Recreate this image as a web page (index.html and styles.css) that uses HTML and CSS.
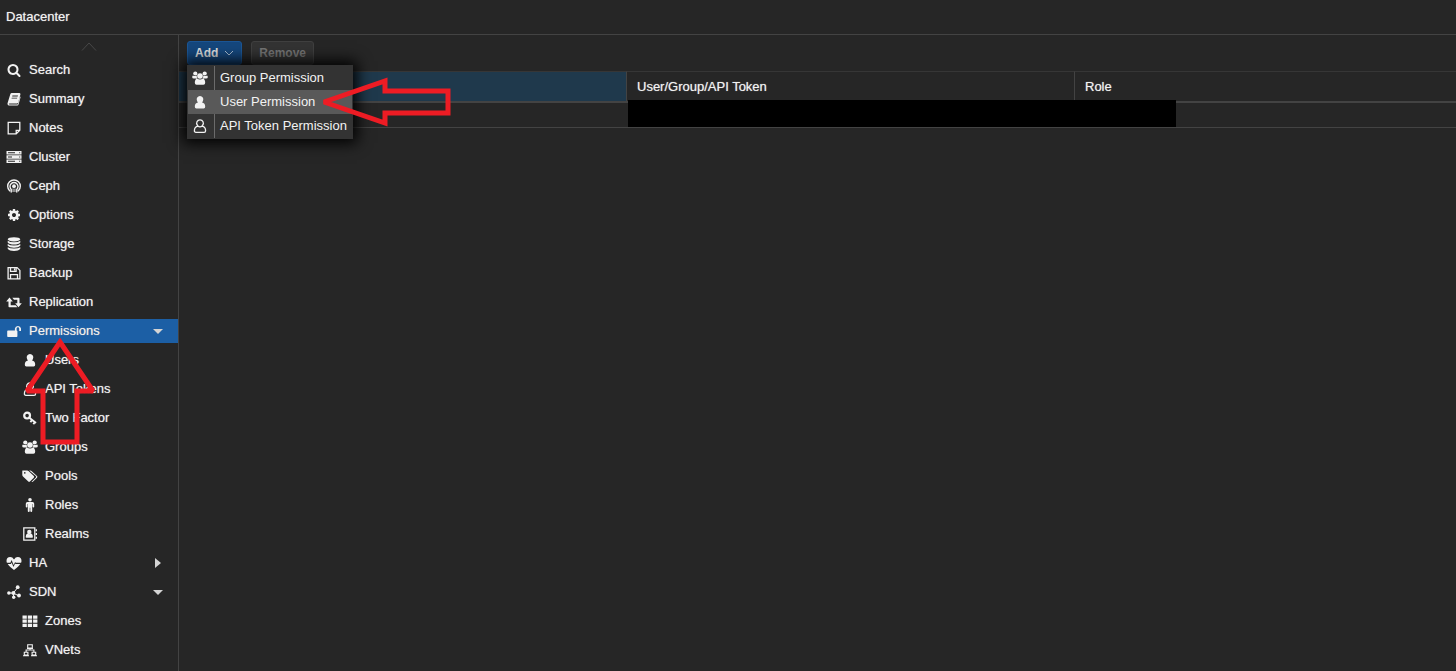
FILE: index.html
```html
<!DOCTYPE html>
<html lang="en">
<head>
<meta charset="utf-8">
<title>Datacenter</title>
<link rel="stylesheet" href="styles.css">
</head>
<body>
<svg class="defs" aria-hidden="true">
  <symbol id="search" viewBox="0 0 1792 1792"><path d="M1216 832q0-185-131.500-316.500t-316.500-131.500-316.500 131.500-131.500 316.500 131.500 316.500 316.500 131.500 316.500-131.500 131.500-316.500zm512 832q0 52-38 90t-90 38q-54 0-90-38l-343-342q-179 124-399 124-143 0-273.500-55.500t-225-150-150-225-55.500-273.500 55.500-273.500 150-225 225-150 273.500-55.500 273.500 55.500 225 150 150 225 55.500 273.500q0 220-124 399l343 343q37 37 37 90z"/></symbol>
  <symbol id="book" viewBox="0 0 14 14"><path fill-rule="evenodd" d="M4.800 1h7.700q1.200.2.900 1.500l-2.200 8q-.3 1-1.400 1H2.500q-.9 0-.8.5.1.400.8.400h7.800q.5 0 .7-.6l2.100-7.300q.6.300.4 1.100l-2 7q-.3 1-1.300 1H2.200Q.7 13.500.5 12q-.1-.6.200-1.300L3.300 2.200Q3.700 1 4.800 1zM5.400 3.500l-.2.900h5.500l.3-.9zM4.800 5.700l-.3.900H10l.3-.9z"/></symbol>
  <symbol id="note" viewBox="0 0 14 14"><path fill="none" stroke="currentColor" stroke-width="1.300" d="M1.200 1.300h11.600v8l-3.600 3.600h-8zM9.200 12.500V9.300h3.300"/></symbol>
  <symbol id="server" viewBox="0 0 16 14"><path fill-rule="evenodd" d="M.5 1h15v3.500H.5zM.5 5.300h15v3.400H.5zM.5 9.500h15V13H.5zM2 2.300v.9h7v-.9zM2 6.500v.9h4v-.9zM2 10.800v.9h7v-.9zM13.200 2.300v.9h1v-.9zM13.200 6.500v.9h1v-.9zM13.200 10.800v.9h1v-.9z"/></symbol>
  <symbol id="ceph" viewBox="0 0 14 14"><g fill="none" stroke="currentColor" stroke-width="1.400" stroke-linecap="round"><path d="M2.600 11.800A6.300 6.300 0 1 1 11.400 11.800M4.200 13V10.400A4 4 0 1 1 9.800 10.400V13"/></g><circle cx="7" cy="7.200" r="1.900"/><path d="M5.600 9.500h.9v3.500h-.9zM7.500 9.500h.9v3.500h-.9z"/></symbol>
  <symbol id="cog" viewBox="0 0 1792 1792"><path d="M1152 896q0-106-75-181t-181-75-181 75-75 181 75 181 181 75 181-75 75-181zm512-109v222q0 12-8 23t-20 13l-185 28q-19 54-39 91 35 50 107 138 10 12 10 25t-9 23q-27 37-99 108t-94 71q-12 0-26-9l-138-108q-44 23-91 38-16 136-29 186-7 28-36 28h-222q-14 0-24.500-8.500t-11.500-21.500l-28-184q-49-16-90-37l-141 107q-10 9-25 9-14 0-25-11-126-114-165-168-7-10-7-23 0-12 8-23 15-21 51-66.500t54-70.500q-27-50-41-99l-183-27q-13-2-21-12.500t-8-23.500v-222q0-12 8-23t19-13l186-28q14-46 39-92-40-57-107-138-10-12-10-24 0-10 9-23 26-36 98.500-107.500t94.500-71.500q13 0 26 10l138 107q44-23 91-38 16-136 29-186 7-28 36-28h222q14 0 24.500 8.500t11.500 21.500l28 184q49 16 90 37l142-107q9-9 24-9 13 0 25 10 129 119 165 170 7 8 7 22 0 12-8 23-15 21-51 66.500t-54 70.500q26 50 41 98l183 28q13 2 21 12.500t8 23.500z"/></symbol>
  <symbol id="database" viewBox="0 0 14 14"><ellipse cx="7" cy="2.300" rx="6.300" ry="2.100"/><path d="M.7 3.800Q3 5.300 7 5.300t6.300-1.500v1.700Q11.500 7.600 7 7.600T.7 5.500zM.7 7Q3 8.500 7 8.500T13.300 7v1.700Q11.500 10.700 7 10.700T.7 8.700zM.7 10.200Q3 11.600 7 11.600t6.300-1.400v1.600Q11.500 14 7 14T.7 11.800z"/></symbol>
  <symbol id="save" viewBox="0 0 14 14"><g fill="none" stroke="currentColor" stroke-width="1.300"><path d="M1.100 1.600h9l2.800 2.800v8.500H1.100zM3.500 12.500V8.600h7v3.900M3.500 2v3.400h5.600V2"/></g><path d="M6.900 2.300h1.300v2.300H6.900z"/></symbol>
  <symbol id="retweet" viewBox="0 0 16 14"><path d="M3.500 2.500l3.300 4H4.700v3.700h5l1.700 2H3.200q-.7 0-.7-.7v-5H.2zM6.300 2.700h6.300q.9 0 .9.900v4.700h2.300l-3.300 4-3.300-4h2.100V4.700H8z"/></symbol>
  <symbol id="unlock" viewBox="0 0 14 14"><path d="M1 6.500h6.900V4.600a3.100 3.100 0 0 1 6.100 0v2q0 .5-.5.5h-.8q-.5 0-.5-.5v-2a1.300 1.300 0 0 0-2.600 0v1.900q.8 0 .8.800v4.900q0 .8-.8.800H1q-.8 0-.8-.8V7.300q0-.8.8-.8z"/></symbol>
  <symbol id="user" viewBox="0 0 14 14"><path d="M7 1a3.300 3.300 0 0 1 3 4.700Q9.400 7.200 9 7.500q3.200.5 3.200 4.300 0 1.700-1.500 1.700H3.300q-1.500 0-1.500-1.700Q1.800 8 5 7.500q-.4-.3-1-1.800A3.300 3.300 0 0 1 7 1z"/></symbol>
  <symbol id="user-o" viewBox="0 0 14 14"><path fill="none" stroke="currentColor" stroke-width="1.300" d="M7 .8a3.300 3.300 0 0 1 2.600 5.400L9 7.200q3.600.6 3.600 4.500 0 1.600-1.500 1.600H2.900q-1.500 0-1.500-1.600 0-3.900 3.600-4.500l-.6-1A3.300 3.300 0 0 1 7 .8zM4.700 7.100Q7 8.800 9.300 7.100"/></symbol>
  <symbol id="key" viewBox="0 0 14 14"><circle cx="4.100" cy="4.600" r="2.900" fill="none" stroke="currentColor" stroke-width="2.200"/><path fill="none" stroke="currentColor" stroke-width="1.900" d="M6 6.500l7 5.400M9.200 8.800l-1.800 2.300M12 11L10.300 13.200"/></symbol>
  <symbol id="users" viewBox="0 0 16 14"><circle cx="3.300" cy="2.500" r="2.100"/><circle cx="12.700" cy="2.500" r="2.100"/><circle cx="8" cy="5" r="2.800"/><path d="M1 4.500q2 1 4 0-.7 1.600.3 3H2Q.2 7.500.2 6.300.2 4.700 1 4.500zM15 4.500q-2 1-4 0 .7 1.600-.3 3H14q1.800 0 1.800-1.200 0-1.600-.8-1.800zM5 7.400q3 2 6 0 2.200.8 2.200 4.300 0 2-1.800 2H4.600q-1.800 0-1.800-2Q2.800 8.200 5 7.400z"/></symbol>
  <symbol id="tags" viewBox="0 0 16 14"><path fill-rule="evenodd" d="M.5 1.500h4.700q.7 0 1.300.6l5.300 5q.8.800 0 1.600l-3.900 3.900q-.8.800-1.600 0L1 7.400Q.3 6.800.3 6V1.700zM2.800 3.100a.8.800 0 1 0 0 1.600.8.800 0 0 0 0-1.600z"/><path d="M7.200 1.500h1q.7 0 1.300.6l5.500 5q.8.800 0 1.600l-3.900 3.900q-.7.700-1.500.2l4.300-4.300q.7-.7-.1-1.400z"/></symbol>
  <symbol id="male" viewBox="0 0 14 14"><circle cx="7" cy="1.800" r="1.800"/><path d="M4.500 4h5q1.700 0 1.700 1.700v3q0 .8-.8.800t-.8-.8V6h-.4v7q0 1-.9 1t-1-1V9.700h-.6V13q0 1-1 1t-.9-1V6h-.4v2.700q0 .8-.8.800t-.8-.8v-3Q2.800 4 4.500 4z"/></symbol>
  <symbol id="address" viewBox="0 0 14 14"><path fill="none" stroke="currentColor" stroke-width="1.300" d="M.8.8h11v12.400H.8z"/><circle cx="6.300" cy="5" r="2.200"/><path d="M4.400 6.500q1.900 1.300 3.800 0 1.700.5 1.700 3.500 0 .8-.8.800H3.500q-.8 0-.8-.8 0-3 1.700-3.500zM12.600 2.300H14v2h-1.400zM12.600 6H14v2h-1.400zM12.600 9.700H14v2h-1.400z"/></symbol>
  <symbol id="heartbeat" viewBox="0 0 16 14"><path d="M8 3.400Q6.500 1 4.200 1 .5 1 .5 5q0 .8.400 1.800h3.500L5.600 4l2 5 1.500-3 .6.800h5.400q.4-1 .4-1.800 0-4-3.700-4Q9.500 1 8 3.400zM1.700 7.900Q3.200 10.300 8 14q4.800-3.700 6.300-6.100H9.500l-.4-.5-1.600 3.500-1.900-4.500-.6 1.500z"/></symbol>
  <symbol id="nodes" viewBox="0 0 14 14"><path fill="none" stroke="currentColor" d="M2 8l4.300.1L10.600 2.600M6.300 8.100l5.200 2.600M6.300 8.100l.3 4"/><circle cx="1.900" cy="8" r="1.800"/><circle cx="6.400" cy="8" r="2"/><circle cx="10.700" cy="2.200" r="1.900"/><circle cx="12" cy="10.500" r="1.900"/><circle cx="6.700" cy="12.300" r="1.700"/></symbol>
  <symbol id="grid" viewBox="0 0 16 14"><path d="M.5 1.500h4.300v3.200H.5zM5.800 1.500h4.300v3.200H5.800zM11.100 1.500h4.300v3.200h-4.300zM.5 5.600h4.300v3.200H.5zM5.800 5.600h4.300v3.200H5.800zM11.100 5.600h4.300v3.200h-4.300zM.5 9.700h4.300v3.200H.5zM5.800 9.700h4.300v3.200H5.800zM11.100 9.700h4.300v3.200h-4.300z"/></symbol>
  <symbol id="network" viewBox="0 0 14 14"><path fill="none" stroke="currentColor" stroke-width="1.100" d="M4.700 1.700h4.600V5H4.700zM1.300 9.200h3.600v2.900H1.300zM9.100 9.200h3.600v2.900H9.100zM7 5v2M3.100 9V7h7.800v2M0 12.700h6M8 12.700h6M4 5.500h6"/></symbol>
</svg>

<header class="titlebar">Datacenter</header>
<div class="body">
  <nav class="sidebar">
    <button class="scroll-up" aria-label="Scroll up"><svg viewBox="0 0 16 9"><path d="M1 8.500L8 1l7 7.500"/></svg></button>
    <ul class="tree">
      <li><a href="#"><svg class="icon"><use href="#search"/></svg>Search</a></li>
      <li><a href="#"><svg class="icon"><use href="#book"/></svg>Summary</a></li>
      <li><a href="#"><svg class="icon"><use href="#note"/></svg>Notes</a></li>
      <li><a href="#"><svg class="icon"><use href="#server"/></svg>Cluster</a></li>
      <li><a href="#"><svg class="icon"><use href="#ceph"/></svg>Ceph</a></li>
      <li><a href="#"><svg class="icon"><use href="#cog"/></svg>Options</a></li>
      <li><a href="#"><svg class="icon"><use href="#database"/></svg>Storage</a></li>
      <li><a href="#"><svg class="icon"><use href="#save"/></svg>Backup</a></li>
      <li><a href="#"><svg class="icon"><use href="#retweet"/></svg>Replication</a></li>
      <li><a href="#" class="selected" aria-current="page"><svg class="icon"><use href="#unlock"/></svg>Permissions<span class="caret open"></span></a></li>
      <li><a href="#" class="child"><svg class="icon"><use href="#user"/></svg>Users</a></li>
      <li><a href="#" class="child"><svg class="icon"><use href="#user-o"/></svg>API Tokens</a></li>
      <li><a href="#" class="child"><svg class="icon"><use href="#key"/></svg>Two Factor</a></li>
      <li><a href="#" class="child"><svg class="icon"><use href="#users"/></svg>Groups</a></li>
      <li><a href="#" class="child"><svg class="icon"><use href="#tags"/></svg>Pools</a></li>
      <li><a href="#" class="child"><svg class="icon"><use href="#male"/></svg>Roles</a></li>
      <li><a href="#" class="child"><svg class="icon"><use href="#address"/></svg>Realms</a></li>
      <li><a href="#"><svg class="icon"><use href="#heartbeat"/></svg>HA<span class="caret closed"></span></a></li>
      <li><a href="#"><svg class="icon"><use href="#nodes"/></svg>SDN<span class="caret open"></span></a></li>
      <li><a href="#" class="child"><svg class="icon"><use href="#grid"/></svg>Zones</a></li>
      <li><a href="#" class="child"><svg class="icon"><use href="#network"/></svg>VNets</a></li>
    </ul>
  </nav>

  <main class="content">
    <div class="toolbar">
      <div class="dropdown">
        <button class="btn primary" aria-haspopup="menu" aria-expanded="true">Add<svg class="chevron" viewBox="0 0 10 6"><path d="M1 1l4 4 4-4"/></svg></button>
        <div class="menu" role="menu">
          <button role="menuitem"><span class="menu-icon"><svg class="icon"><use href="#users"/></svg></span>Group Permission</button>
          <button role="menuitem" class="active"><span class="menu-icon"><svg class="icon"><use href="#user"/></svg></span>User Permission</button>
          <button role="menuitem"><span class="menu-icon"><svg class="icon"><use href="#user-o"/></svg></span>API Token Permission</button>
        </div>
      </div>
      <button class="btn" disabled>Remove</button>
    </div>
    <div class="grid">
      <table>
        <colgroup><col class="wide"><col class="wide"><col></colgroup>
        <thead><tr><th class="sorted"></th><th>User/Group/API Token</th><th>Role</th></tr></thead>
        <tbody><tr><td></td><td></td><td></td></tr></tbody>
      </table>
      <div class="redaction"></div>
    </div>
  </main>
</div>
<svg class="arrow arrow-up" viewBox="0 0 76 108" aria-hidden="true"><path d="M38 4L71 53H55V104H21V53H5Z"/></svg>
<svg class="arrow arrow-left" viewBox="0 0 132 52" aria-hidden="true"><path d="M5 26L66 5V15H129V37H66V47Z"/></svg>
</body>
</html>
```
FILE: styles.css
```css
* { box-sizing: border-box; }

body {
  margin: 0;
  min-height: 100vh;
  display: flex;
  flex-direction: column;
  background: #262626;
  color: #f2f2f2;
  font: 13px/24px "Liberation Sans", Arial, sans-serif;
}

button { font: inherit; color: inherit; }

.defs { position: absolute; width: 0; height: 0; }

.icon {
  width: 16px;
  height: 14px;
  flex: none;
  fill: currentColor;
}

.titlebar,
.tree,
th { text-shadow: 0 0 1px #a8a8a8; }

.titlebar {
  height: 35px;
  padding: 5px 6px;
  border-bottom: 1px solid #434343;
}

.body { flex: 1; display: flex; }

/* Navigation */
.sidebar {
  width: 179px;
  flex: none;
  border-right: 1px solid #434343;
}

.scroll-up {
  display: block;
  width: 100%;
  height: 23px;
  padding: 0;
  border: 0;
  background: none;
}
.scroll-up svg {
  display: block;
  width: 16px;
  height: 9px;
  margin: 0 auto;
  fill: none;
  stroke: #484848;
}

.tree {
  margin: 0;
  padding: 0;
  list-style: none;
  display: flex;
  flex-direction: column;
  gap: 5px;
}
.tree a {
  display: flex;
  align-items: center;
  gap: 7px;
  height: 24px;
  padding: 0 15px 0 6px;
  color: inherit;
  text-decoration: none;
}
.tree a.child { padding-left: 22px; }
.tree a.selected { background: #1c5fa5; }

.caret {
  margin-left: auto;
  border: 5px solid transparent;
}
.caret.open {
  border-top-color: #d4d4d4;
  border-bottom: 0;
}
.caret.closed {
  border-left: 6px solid #d4d4d4;
  border-right: 0;
  margin-right: 2px;
}

/* Toolbar */
.content { flex: 1; min-width: 0; }

.toolbar {
  display: flex;
  gap: 9px;
  height: 36px;
  padding: 6px 8px;
}

.btn {
  display: flex;
  align-items: center;
  gap: 6px;
  height: 24px;
  padding: 0 7px;
  border: 1px solid #404040;
  border-radius: 3px;
  background: #333;
  font-size: 12px;
  font-weight: bold;
}
.btn:disabled { color: #757575; }
.btn.primary {
  border-color: #1b5695;
  background: #15477d;
  color: #dedede;
}
.chevron {
  width: 10px;
  height: 6px;
  fill: none;
  stroke: #a9bdd2;
}

.dropdown { position: relative; }
.menu {
  position: absolute;
  z-index: 2;
  top: 100%;
  left: 0;
  padding: 1px;
  background: #333;
  box-shadow: 0 0 14px 4px #000;
}
.menu button {
  display: flex;
  align-items: center;
  width: 100%;
  height: 24px;
  padding: 0 5px 0 0;
  border: 0;
  background: none;
  white-space: nowrap;
}
.menu button.active { background: #595959; }
.menu-icon {
  display: flex;
  align-items: center;
  width: 27px;
  height: 24px;
  margin-right: 5px;
  padding-left: 4px;
  border-right: 1px solid #6b6b6b;
}
.menu button.active .menu-icon { border-color: transparent; }

/* Permission list */
.grid { position: relative; }
table {
  width: 100%;
  table-layout: fixed;
  border-collapse: separate;
  border-spacing: 0;
}
.wide { width: 448px; }
th {
  height: 32px;
  padding: 0 10px;
  border-top: 1px solid #363636;
  border-right: 1px solid #434343;
  border-bottom: 2px solid #434343;
  text-align: left;
  font-weight: normal;
}
th:last-child { border-right: 0; }
th.sorted { background: #1f394c; }
td {
  height: 25px;
  padding: 0;
  border-bottom: 1px solid #434343;
}
.redaction {
  position: absolute;
  top: 29px;
  left: 449px;
  width: 548px;
  height: 27px;
  background: #000;
}

/* Annotation arrows */
.arrow {
  position: absolute;
  z-index: 3;
  fill: none;
  stroke: #ed1c24;
  stroke-width: 5;
  stroke-miterlimit: 2;
  pointer-events: none;
}
.arrow-up { left: 22px; top: 338px; width: 76px; height: 108px; }
.arrow-left { left: 319px; top: 76px; width: 132px; height: 52px; }
```
